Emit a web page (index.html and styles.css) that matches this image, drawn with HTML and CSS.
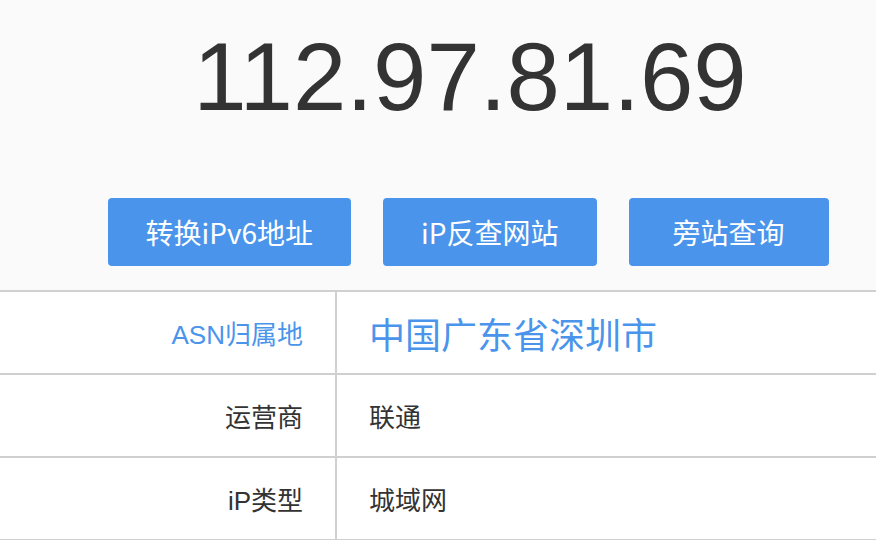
FILE: index.html
```html
<!DOCTYPE html>
<html lang="zh-CN">
  <head>
    <meta charset="UTF-8" />
    <meta name="viewport" content="width=device-width, initial-scale=1.0" />
    <title>112.97.81.69 - iP查询</title>
    <link rel="stylesheet" href="styles.css">
  </head>
  <body>
    <div class="hero">
      <h1 class="ip">112.97.81.69</h1>
      <div class="actions">
        <a class="btn" href="#">转换iPv6地址</a>
        <a class="btn" href="#">iP反查网站</a>
        <a class="btn" href="#">旁站查询</a>
      </div>
    </div>
    <table class="info">
      <tr class="highlight">
        <th>ASN归属地</th>
        <td class="big">中国广东省深圳市</td>
      </tr>
      <tr>
        <th>运营商</th>
        <td>联通</td>
      </tr>
      <tr>
        <th>iP类型</th>
        <td>城域网</td>
      </tr>
    </table>
  </body>
</html>
```

FILE: styles.css
```css
* {
  box-sizing: border-box;
}

body {
  margin: 0;
  font-family: "Liberation Sans", "Noto Sans CJK SC", sans-serif;
  background: #fff;
  color: #333;
}

/* Header */
.hero {
  background: #fafafa;
  padding: 29px 0 24px 64px;
  text-align: center;
}

.ip {
  margin: 0;
  font-size: 96px;
  line-height: 96px;
  font-weight: normal;
  color: #333;
}

.actions {
  display: flex;
  justify-content: center;
  gap: 32px;
  margin-top: 73px;
  padding-right: 4px;
}

.btn {
  display: block;
  min-width: 200px;
  height: 68px;
  line-height: 68px;
  padding: 0 38px;
  border-radius: 4px;
  background: #4a95eb;
  color: #fff;
  font-family: "Noto Sans CJK SC", sans-serif;
  font-size: 28px;
  text-align: center;
  text-decoration: none;
}

/* Info table */
.info {
  width: 100%;
  border-collapse: collapse;
  font-size: 26px;
}

.info tr {
  border-top: 2px solid #d0d0d0;
  border-bottom: 2px solid #d0d0d0;
}

.info th,
.info td {
  height: 83px;
  padding: 0 32px;
  vertical-align: middle;
}

.info th {
  width: 336px;
  text-align: right;
  font-weight: normal;
  border-right: 2px solid #d0d0d0;
}

.info td {
  text-align: left;
}

.highlight th,
.highlight td {
  color: #4a95eb;
}

.info .big {
  font-size: 36px;
}
```
